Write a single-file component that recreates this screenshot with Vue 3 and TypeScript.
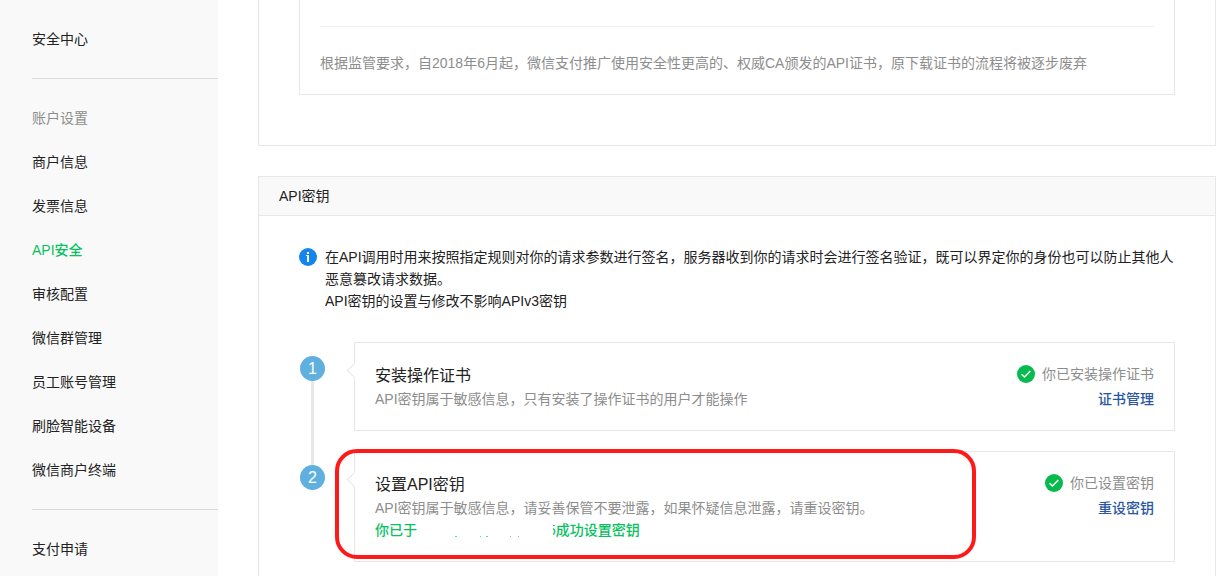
<script setup lang="ts">
interface MenuItem {
  label: string
  kind?: 'heading' | 'active'
}

interface Step {
  title: string
  desc: string
  status: string
  action: string
  done?: { before: string; visible: string; after: string }
}

const menu: MenuItem[][] = [
  [{ label: '安全中心' }],
  [
    { label: '账户设置', kind: 'heading' },
    { label: '商户信息' },
    { label: '发票信息' },
    { label: 'API安全', kind: 'active' },
    { label: '审核配置' },
    { label: '微信群管理' },
    { label: '员工账号管理' },
    { label: '刷脸智能设备' },
    { label: '微信商户终端' },
  ],
  [{ label: '支付申请' }],
]

const steps: Step[] = [
  {
    title: '安装操作证书',
    desc: 'API密钥属于敏感信息，只有安装了操作证书的用户才能操作',
    status: '你已安装操作证书',
    action: '证书管理',
  },
  {
    title: '设置API密钥',
    desc: 'API密钥属于敏感信息，请妥善保管不要泄露，如果怀疑信息泄露，请重设密钥。',
    status: '你已设置密钥',
    action: '重设密钥',
    done: { before: '你已于', visible: '5', after: '成功设置密钥' },
  },
]
</script>

<template>
  <div class="page">
    <nav class="sidebar">
      <ul v-for="(group, g) in menu" :key="g" class="group">
        <li v-for="item in group" :key="item.label" class="item">
          <span v-if="item.kind === 'heading'" class="heading">{{ item.label }}</span>
          <a v-else href="#" class="link" :class="{ active: item.kind === 'active' }">{{ item.label }}</a>
        </li>
      </ul>
    </nav>

    <main class="main">
      <section class="panel cert">
        <div class="notice">
          <hr class="rule" />
          <p class="note">根据监管要求，自2018年6月起，微信支付推广使用安全性更高的、权威CA颁发的API证书，原下载证书的流程将被逐步废弃</p>
        </div>
      </section>

      <section class="panel">
        <h2 class="panel-title">API密钥</h2>
        <div class="panel-body">
          <div class="tip">
            <svg class="icon tip-icon" viewBox="0 0 18 18" aria-hidden="true">
              <circle cx="9" cy="9" r="9" fill="#1485ee" />
              <path d="M8 4h2v2H8zM7 7h3v7H8V8H7z" fill="#fff" />
            </svg>
            <div>
              <p>在API调用时用来按照指定规则对你的请求参数进行签名，服务器收到你的请求时会进行签名验证，既可以界定你的身份也可以防止其他人恶意篡改请求数据。</p>
              <p>API密钥的设置与修改不影响APIv3密钥</p>
            </div>
          </div>

          <ol class="steps">
            <li v-for="(step, i) in steps" :key="step.title" class="step">
              <div class="track">
                <span class="number">{{ i + 1 }}</span>
                <span v-if="i < steps.length - 1" class="connector"></span>
              </div>
              <div class="card">
                <div class="info">
                  <h3 class="step-title">{{ step.title }}</h3>
                  <p class="desc">{{ step.desc }}</p>
                  <p v-if="step.done" class="done">
                    <span>{{ step.done.before }}</span>
                    <svg class="hidden-date" viewBox="0 0 131 22" aria-hidden="true">
                      <path d="M38 17.500h2M63 17.500h1M69 17.500h2M93 17.500h1M101 17.500h1" stroke="#07c160" stroke-opacity=".6" />
                    </svg>
                    <span class="cut">{{ step.done.visible }}</span>
                    <span>{{ step.done.after }}</span>
                  </p>
                </div>
                <div class="side">
                  <p class="status">
                    <svg class="icon" viewBox="0 0 18 18" aria-hidden="true">
                      <circle cx="9" cy="9" r="9" fill="#06ba4d" />
                      <path d="M4.500 9.200l3 2.800 5.800-6" fill="none" stroke="#fff" stroke-width="1.500" />
                    </svg>
                    {{ step.status }}
                  </p>
                  <a href="#" class="action">{{ step.action }}</a>
                </div>
                <span v-if="step.done" class="highlight"></span>
              </div>
            </li>
          </ol>
        </div>
      </section>
    </main>
  </div>
</template>

<style>
body {
  margin: 0;
  background: #fff;
}
</style>

<style scoped>
.page {
  display: flex;
  height: 100vh;
  overflow: hidden;
  font-family: "Liberation Sans", "Noto Sans CJK SC", sans-serif;
  font-size: 14px;
  line-height: 22px;
  color: #222;
}

p,
h2,
h3,
ul,
ol {
  margin: 0;
  padding: 0;
  list-style: none;
  font-weight: 400;
}

a {
  text-decoration: none;
}

.sidebar {
  flex: 0 0 186px;
  height: max-content;
  min-height: 100%;
  padding-left: 32px;
  background: #f9f9f9;
}

.group {
  padding: 17px 0;
}

.group + .group {
  border-top: 1px solid #dadada;
}

.item {
  line-height: 44px;
}

.heading {
  color: #8d8d8d;
}

.link {
  display: block;
  color: #222;
}

.link.active {
  color: #07c160;
  font-weight: 500;
}

.main {
  flex: 1;
  min-width: 0;
  margin: 0 7px 0 40px;
}

.panel {
  border: 1px solid #e7e7e7;
}

.cert {
  border-top: 0;
  padding: 0 40px 50px;
  margin-bottom: 30px;
}

.notice {
  border: 1px solid #e7e7e7;
  border-top: 0;
  padding: 26px 20px 20px;
}

.rule {
  height: 1px;
  margin: 0 0 25px;
  border: 0;
  background: #f2f2f2;
}

.note {
  color: #8d8d8d;
}

.panel-title {
  padding: 0 20px;
  border-bottom: 1px solid #e7e7e7;
  background: #f9f9f9;
  font-size: 14px;
  line-height: 38px;
}

.panel-body {
  padding: 30px 40px;
}

.tip {
  display: flex;
  gap: 8px;
  margin-bottom: 30px;
}

.icon {
  flex: none;
  width: 18px;
  height: 18px;
}

.tip-icon {
  margin-top: 2px;
}

.step {
  display: flex;
}

.track {
  display: flex;
  flex: 0 0 55px;
  flex-direction: column;
  box-sizing: border-box;
  padding: 14px 0 0 1px;
}

.number {
  width: 25px;
  height: 25px;
  border-radius: 50%;
  background: #60b0df;
  color: #fff;
  font-size: 16px;
  line-height: 25px;
  text-align: center;
}

.connector {
  flex: 1;
  width: 3px;
  margin: 0 0 -14px 11px;
  background: #e7e7e7;
}

.card {
  position: relative;
  display: flex;
  flex: 1;
  justify-content: space-between;
  min-width: 0;
  margin-bottom: 20px;
  padding: 20px;
  border: 1px solid #e7e7e7;
}

.card::before {
  content: "";
  position: absolute;
  top: 22px;
  left: -6px;
  width: 9px;
  height: 9px;
  border: 1px solid #e7e7e7;
  border-top-color: transparent;
  border-right-color: transparent;
  background: #fff;
  transform: rotate(45deg);
}

.step-title {
  font-size: 16px;
  line-height: 25px;
}

.desc,
.status {
  color: #8d8d8d;
}

.done {
  display: flex;
  color: #07c160;
  font-weight: 500;
}

.hidden-date {
  width: 131px;
  height: 22px;
}

.cut {
  position: relative;
}

.cut::before {
  content: "";
  position: absolute;
  inset: 0 3px 0 0;
  background: #fff;
}

.side {
  display: flex;
  flex-direction: column;
  align-items: flex-end;
  gap: 3px;
}

.status {
  display: flex;
  align-items: center;
  gap: 7px;
}

.action {
  color: #2b57a2;
  font-weight: 500;
}

.highlight {
  position: absolute;
  inset: -3px 198px 2px -20px;
  border: 4px solid #ff1a1a;
  border-radius: 22px;
  pointer-events: none;
}
</style>
